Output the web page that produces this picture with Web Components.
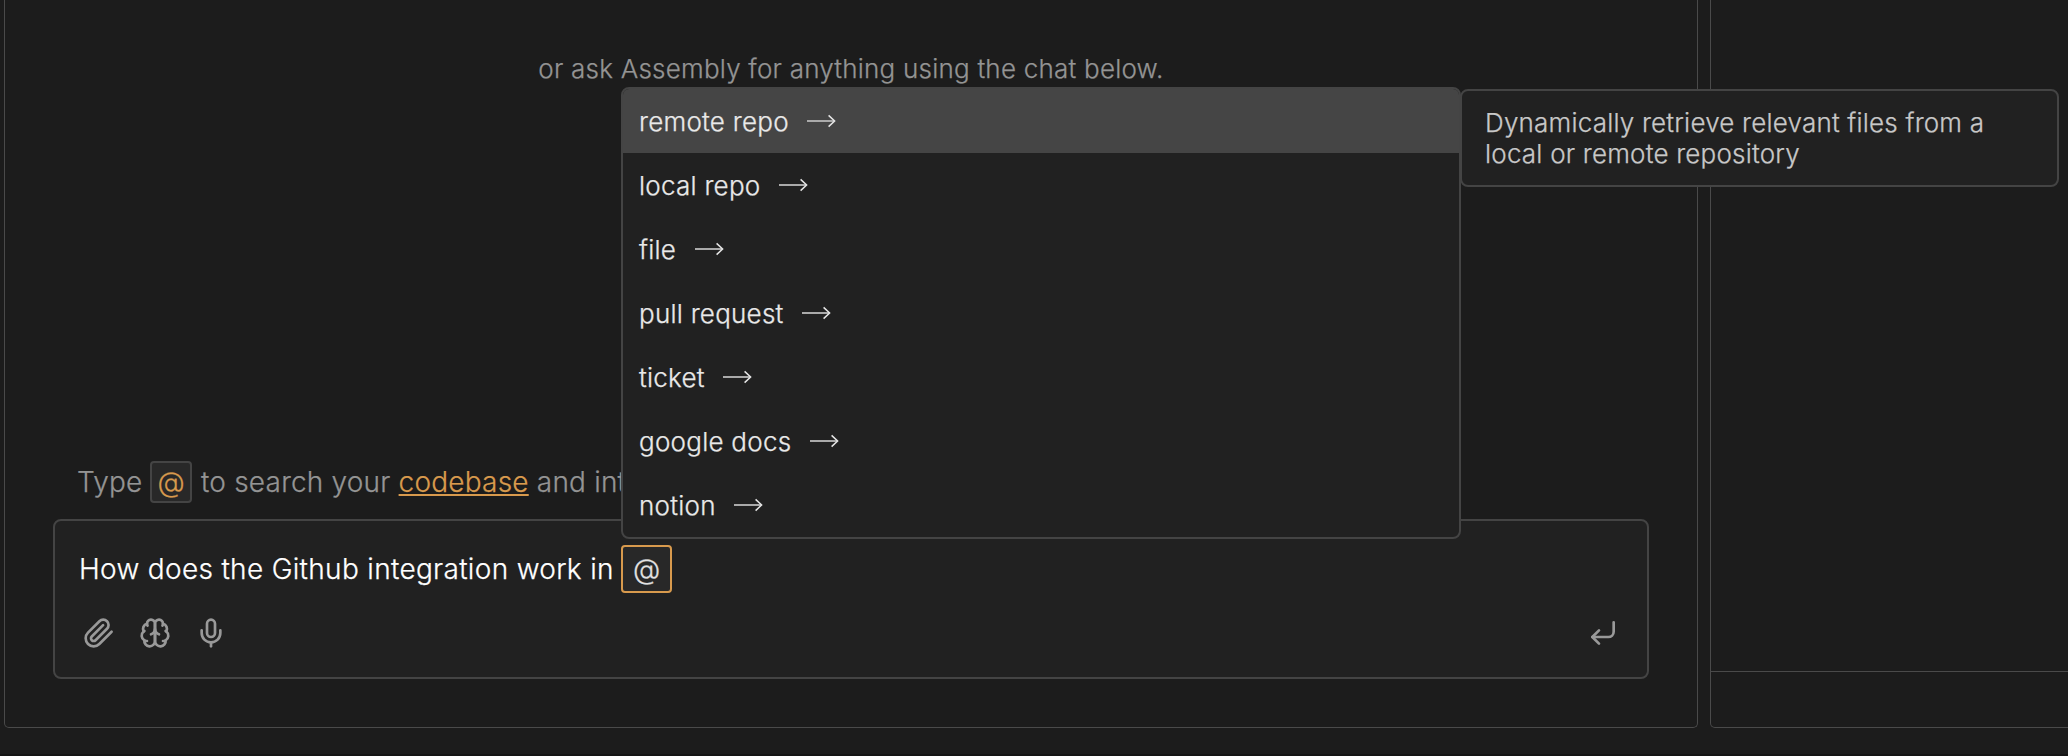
<!DOCTYPE html>
<html lang="en">
<head>
<meta charset="utf-8">
<title>Assembly</title>
<style>
html,body{margin:0;height:100%;background:#1c1c1c;overflow:hidden}
body{font-family:Inter,"Liberation Sans",sans-serif;font-weight:300;-webkit-text-stroke-width:.25px;color:#fff}
</style>
</head>
<body>
<app-shell>
  <chat-panel slot="main">
    <p slot="hint" style="margin:0">or ask Assembly for anything using the chat below.</p>
    <chat-tip slot="tip"></chat-tip>
    <chat-composer slot="composer">How does the Github integration work in<mention-chip slot="chip">
        <mention-menu>
          <menu-item selected>remote repo<menu-tooltip slot="tooltip">Dynamically retrieve relevant files from a local or remote repository</menu-tooltip></menu-item>
          <menu-item>local repo</menu-item>
          <menu-item>file</menu-item>
          <menu-item>pull request</menu-item>
          <menu-item>ticket</menu-item>
          <menu-item>google docs</menu-item>
          <menu-item>notion</menu-item>
        </mention-menu>
      </mention-chip></chat-composer>
  </chat-panel>
  <side-panel slot="side"></side-panel>
</app-shell>
<script>
const define = (name, html) => {
  const tpl = document.createElement('template');
  tpl.innerHTML = html;
  customElements.define(name, class extends HTMLElement {
    constructor() {
      super();
      this.attachShadow({mode: 'open'}).append(tpl.content.cloneNode(true));
    }
  });
};

define('app-shell', `<style>
:host{display:flex;flex-direction:column;height:756px;width:2068px;box-sizing:border-box;overflow:hidden}
.row{flex:none;height:728px;display:grid;grid-template-columns:1694px 1fr;gap:12px;padding-left:4px;margin-right:-8px}
.edge{margin-top:26px;height:2px;background:#151515}
</style>
<div class="row"><slot name="main"></slot><slot name="side"></slot></div><div class="edge"></div>`);

define('chat-panel', `<style>
:host{display:flex;flex-direction:column;box-sizing:border-box;border:1px solid #4a4a4a;border-top:0;border-radius:0 0 5px 5px;padding:53px 48px 48px}
.hint{font-size:26px;line-height:32px;letter-spacing:.22px;text-align:center;color:#949494;flex:1}
.tip{padding-left:24px;margin-bottom:16px}
</style>
<div class="hint"><slot name="hint"></slot></div>
<div class="tip"><slot name="tip"></slot></div>
<slot name="composer"></slot>`);

define('chat-tip', `<style>
:host{display:flex;align-items:center;height:42px;font-size:28px;letter-spacing:.2px;color:#949494;white-space:pre}
.type{width:65px}
kbd{font:inherit;letter-spacing:0;box-sizing:border-box;width:42px;height:42px;line-height:38px;text-align:center;color:#d89a4d;background:#282828;border:2px solid #444;border-radius:4px;margin:0 9px 0 8px}
a{color:#d89a4d;text-decoration:underline;text-decoration-thickness:2px;text-underline-offset:2px;text-decoration-skip-ink:none}
</style><span class="type">Type</span><kbd>@</kbd><span>to search your <a>codebase</a> and int</span>`);

define('chat-composer', `<style>
:host{display:flex;flex-direction:column;justify-content:space-between;box-sizing:border-box;height:160px;border:2px solid #444;border-radius:8px;background:#212121;padding:24px 28px 28px 24px}
.line{display:flex;align-items:center;height:48px;font-size:28px;letter-spacing:.32px}
.text{width:542px;white-space:nowrap}
.tools{display:flex;gap:24px;padding-left:4px;height:32px}
.send{margin-left:auto}
</style>
<div class="line"><span class="text"><slot></slot></span><slot name="chip"></slot></div>
<div class="tools"><line-icon name="clip"></line-icon><line-icon name="brain"></line-icon><line-icon name="mic"></line-icon><line-icon class="send" name="enter"></line-icon></div>`);

define('mention-chip', `<style>
:host{display:block;position:relative;box-sizing:border-box;flex:none;width:51px;height:48px;border:2px solid #d89a4d;border-radius:4px;background:#282828;color:#e2e2e2;font-size:28px;line-height:44px;text-align:center;letter-spacing:0}
.pop{position:absolute;left:-2px;bottom:52px;z-index:2;text-align:left}
</style>@<div class="pop"><slot></slot></div>`);

define('mention-menu', `<style>
:host{display:flex;flex-direction:column;box-sizing:border-box;width:840px;border:2px solid #444;border-radius:8px;background:#212121}
</style><slot></slot>`);

define('menu-item', `<style>
:host{position:relative;display:flex;align-items:center;gap:18.5px;box-sizing:border-box;height:64px;padding:0 16px;font-size:26px;line-height:32px;letter-spacing:.25px;color:#e9e9e9;white-space:nowrap}
:host([selected]){background:#454545;border-radius:6px 6px 0 0}
.label{padding-top:2px}
svg{display:block;flex:none}
.tip{position:absolute;left:837px;top:0}
</style><span class="label"><slot></slot></span><svg width="29" height="16" viewBox="0 0 29 16" fill="none"><path d="M0 8H27" stroke="#aaa" stroke-width="2"/><path d="M21.6 2.4L27.6 8L21.6 13.6" stroke="#e6e6e6" stroke-width="1.5"/></svg><div class="tip"><slot name="tooltip"></slot></div>`);

define('menu-tooltip', `<style>
:host{display:block;box-sizing:border-box;width:599px;height:98px;border:2px solid #444;border-radius:8px;background:#212121;padding:16px 23px;font-size:26px;line-height:31px;letter-spacing:.2px;color:#c8c8c8;white-space:normal}
</style><slot></slot>`);

define('side-panel', `<style>
:host{display:flex;flex-direction:column;justify-content:flex-end;box-sizing:border-box;border:1px solid #4a4a4a;border-top:0;border-radius:0 0 5px 5px}
footer{height:55px;border-top:1px solid #4a4a4a}
</style><footer></footer>`);

const ICONS = {
  clip: '<path d="m21.44 11.05-9.19 9.19a6 6 0 0 1-8.49-8.49l8.57-8.57A4 4 0 1 1 18 8.84l-8.59 8.57a2 2 0 0 1-2.83-2.83l8.49-8.48"/>',
  brain: '<path d="M12 5a3 3 0 1 0-5.997.125 4 4 0 0 0-2.526 5.77 4 4 0 0 0 .556 6.588A4 4 0 1 0 12 18Z"/><path d="M12 5a3 3 0 1 1 5.997.125 4 4 0 0 1 2.526 5.77 4 4 0 0 1-.556 6.588A4 4 0 1 1 12 18Z"/><path d="M15 13a4.5 4.5 0 0 1-3-4 4.5 4.5 0 0 1-3 4"/><path d="M17.599 6.5a3 3 0 0 0 .399-1.375"/><path d="M6.003 5.125A3 3 0 0 0 6.401 6.5"/><path d="M3.477 10.896a4 4 0 0 1 .585-.396"/><path d="M19.938 10.5a4 4 0 0 1 .585.396"/><path d="M6 18a4 4 0 0 1-1.967-.516"/><path d="M19.967 17.484A4 4 0 0 1 18 18"/>',
  mic: '<rect x="9" y="2" width="6" height="13" rx="3"/><path d="M19 10v2a7 7 0 0 1-14 0v-2"/><path d="M12 19v3"/>',
  enter: '<path d="M20 4v7a4 4 0 0 1-4 4H4"/><path d="m9 10-5 5 5 5"/>'
};
customElements.define('line-icon', class extends HTMLElement {
  constructor() {
    super();
    this.attachShadow({mode: 'open'});
  }
  connectedCallback() {
    this.shadowRoot.innerHTML = `<style>:host{display:block;width:32px;height:32px;color:#999}svg{display:block}</style><svg width="32" height="32" viewBox="0 0 24 24" fill="none" stroke="currentColor" stroke-width="2" stroke-linecap="round" stroke-linejoin="round">${ICONS[this.getAttribute('name')]}</svg>`;
  }
});
</script>
</body>
</html>
